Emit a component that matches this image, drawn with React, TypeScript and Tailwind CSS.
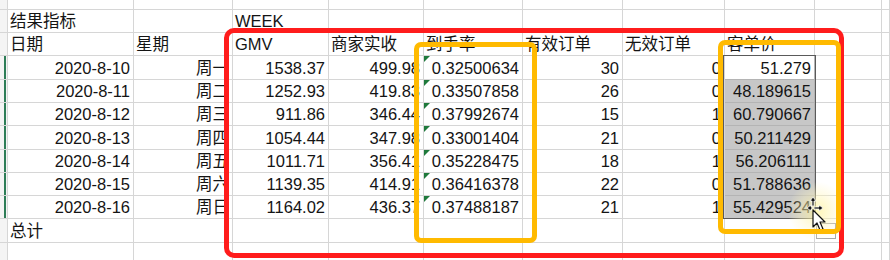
import React from 'react';

const COLS = ['w-[126px]', 'w-[99px]', 'w-[96px]', 'w-[95px]', 'w-[99px]', 'w-[100px]', 'w-[102px]', 'w-[90px]', 'w-[67px]', 'flex-1'];

type Row = { h: string; cells: (string | null)[]; align?: 'left' | 'right'; data?: boolean; sel?: boolean };

const DATA = [
  ['2020-8-10', '周一', '1538.37', '499.98', '0.32500634', '30', '0', '51.279'],
  ['2020-8-11', '周二', '1252.93', '419.83', '0.33507858', '26', '0', '48.189615'],
  ['2020-8-12', '周三', '911.86', '346.44', '0.37992674', '15', '1', '60.790667'],
  ['2020-8-13', '周四', '1054.44', '347.98', '0.33001404', '21', '0', '50.211429'],
  ['2020-8-14', '周五', '1011.71', '356.41', '0.35228475', '18', '1', '56.206111'],
  ['2020-8-15', '周六', '1139.35', '414.91', '0.36416378', '22', '0', '51.788636'],
  ['2020-8-16', '周日', '1164.02', '436.37', '0.37488187', '21', '1', '55.429524'],
];
const DATA_H = ['h-[24px]', 'h-[23px]', 'h-[23px]', 'h-[24px]', 'h-[23px]', 'h-[23px]', 'h-[23px]'];

const ROWS: Row[] = [
  { h: 'h-[10px]', cells: [] },
  { h: 'h-[23px]', cells: ['结果指标', null, 'WEEK'] },
  { h: 'h-[23px]', cells: ['日期', '星期', 'GMV', '商家实收', '到手率', '有效订单', '无效订单', '客单价'] },
  ...DATA.map((d, i) => ({ h: DATA_H[i], cells: d, align: 'right' as const, data: true, sel: true })),
  { h: 'h-[24px]', cells: ['总计'] },
  { h: 'h-[24px]', cells: [] },
];

function Cursor() {
  return (
    <svg width="40" height="46" viewBox="0 0 40 46" className="absolute left-[796px] top-[192px]">
      {/* move cross */}
      <g fill="#111" stroke="#fff" strokeWidth="0.8">
        <path d="M17 5 L20 9 L18 9 L18 14 L16 14 L16 9 L14 9 Z" />
        <path d="M11 16 L15 13 L15 15 L16 15 L16 17 L15 17 L15 19 Z" />
        <path d="M27 16 L23 13 L23 15 L18 15 L18 17 L23 17 L23 19 Z" />
      </g>
      {/* arrow pointer */}
      <path d="M17 18 L17 35 L21 31 L24 38 L27 37 L24 30 L29 30 Z" fill="#fff" stroke="#111" strokeWidth="1.2" strokeLinejoin="round" />
    </svg>
  );
}

export default function App() {
  return (
    <div className="relative w-[890px] h-[260px] overflow-hidden bg-white text-[#141414] text-[16.5px] font-['Liberation_Sans','Noto_Sans_CJK_SC',sans-serif]">
      {ROWS.map((r, ri) => (
        <div key={ri} className={`flex ${r.h}`}>
          <div className={`w-[8px] shrink-0 border-r border-b border-[#d6d6d6] bg-[#f4f4f4] pl-[4px]`}>
            {r.sel && <div className="w-[2px] h-full bg-[#2e7d57]" />}
          </div>
          {COLS.map((w, ci) => {
            const txt = r.cells[ci] ?? null;
            const right = r.align === 'right';
            const selCell = r.sel && ci === 7;
            const active = selCell && ri === 3;
            return (
              <div
                key={ci}
                className={`${w} shrink-0 relative border-r border-b whitespace-nowrap overflow-hidden flex items-end pb-[1px] leading-[20px] ${
                  selCell ? 'border-[#b4b4b4]' : 'border-[#d6d6d6]'
                } ${selCell && !active ? 'bg-[#c7c7c7]' : ''} ${right ? 'justify-end pr-[3px]' : 'pl-[2px]'}`}
              >
                {r.data && ci === 4 && (
                  <span className="absolute left-0 top-0 w-0 h-0 border-t-[6px] border-r-[6px] border-t-[#1f7a3c] border-r-transparent" />
                )}
                {txt}
              </div>
            );
          })}
        </div>
      ))}

      {/* selection outline */}
      <div className="absolute left-[723px] top-[55px] w-[93px] h-[164px] border border-[#5a5a5a]" />

      {/* paste options */}
      <div className="absolute left-[816px] top-[223px] w-[20px] h-[16px] border border-[#a8a8a8] bg-white flex items-end justify-center text-[9px] leading-[9px] text-[#555]">
        ···
      </div>

      {/* cursor glow */}
      <div className="absolute left-[788px] top-[182px] w-[58px] h-[58px] rounded-full bg-[radial-gradient(circle,rgba(255,244,160,0.75)_0%,rgba(255,246,190,0.35)_45%,transparent_72%)]" />
      <Cursor />

      {/* annotations */}
      <div className="absolute left-[224px] top-[28px] w-[620px] h-[230px] border-[5px] border-[#ff1c1c] rounded-[10px]" />
      <div className="absolute left-[414px] top-[42px] w-[123px] h-[201px] border-[5px] border-[#ffba00] rounded-[7px]" />
      <div className="absolute left-[718px] top-[40px] w-[123px] h-[194px] border-[5px] border-[#ffba00] rounded-[7px]" />
    </div>
  );
}
